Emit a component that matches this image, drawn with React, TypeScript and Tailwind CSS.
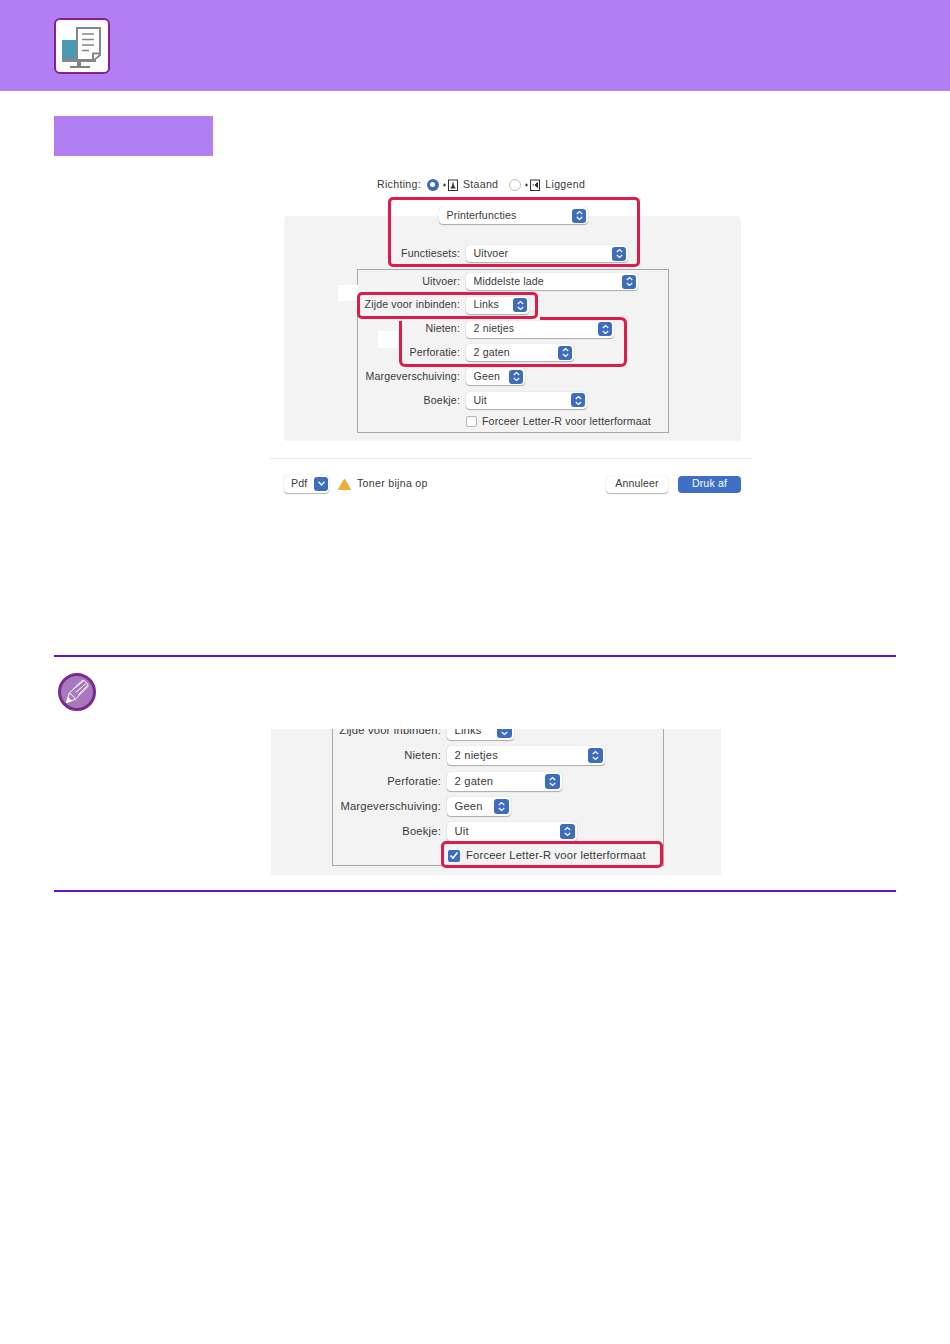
import React from "react";

const Stepper = ({ large }: { large?: boolean }) => (
  <span
    className={`flex items-center justify-center rounded-[3px] bg-[#3e6dbd] ${
      large ? "h-[15px] w-[15px]" : "h-[14px] w-[14px]"
    }`}
  >
    <svg width="9" height="11" viewBox="0 0 9 11" fill="none" stroke="#fff" strokeWidth="1.2">
      <path d="M1.8 4 4.5 1.6 7.2 4" />
      <path d="M1.8 7 4.5 9.4 7.2 7" />
    </svg>
  </span>
);

// macOS popup knop
const Select = ({ text, width, large }: { text: string; width: number; large?: boolean }) => (
  <div
    style={{ width }}
    className={`flex items-center justify-between rounded-[4px] bg-white pl-[7.5px] pr-[2px] shadow-[0_1px_1px_rgba(0,0,0,0.28),0_0_1px_rgba(0,0,0,0.25)] ${
      large ? "h-[19px]" : "h-[17px]"
    }`}
  >
    <span>{text}</span>
    <Stepper large={large} />
  </div>
);

const Row = ({
  label,
  text,
  width,
  labelWidth,
  large,
}: {
  label: string;
  text: string;
  width: number;
  labelWidth: number;
  large?: boolean;
}) => (
  <div className="flex items-center gap-[6px]">
    <span style={{ width: labelWidth }} className="shrink-0 whitespace-nowrap text-right">
      {label}
    </span>
    <Select text={text} width={width} large={large} />
  </div>
);

const OrientationIcon = ({ landscape }: { landscape?: boolean }) => (
  <svg className="block" width="16" height="12" viewBox="0 0 16 12" fill="none" stroke="#333" strokeWidth="1">
    <path d="M1 6h3M2.500 4.500v3" />
    <rect x="6.500" y="1" width="9" height="10.500" />
    {landscape ? (
      <path d="M8.500 6h1.500M13.500 3.500v5L11 6z" fill="#333" />
    ) : (
      <path d="M11 3v3M8.500 9h5M9.500 8.500 11 5.500l1.500 3z" fill="#333" />
    )}
  </svg>
);

const Radio = ({ on }: { on?: boolean }) =>
  on ? (
    <span className="flex h-[12px] w-[12px] items-center justify-center rounded-full bg-[#3e6dbd]">
      <span className="block h-[5px] w-[5px] rounded-full bg-white" />
    </span>
  ) : (
    <span className="block h-[12px] w-[12px] rounded-full border border-[#bdbdbd] bg-white" />
  );

const HeaderIcon = () => (
  <div className="flex h-[56px] w-[56px] items-center justify-center rounded-[6px] border-2 border-[#8a2090] bg-white">
    <svg width="52" height="52" viewBox="0 0 52 52">
      <rect x="6" y="20" width="34" height="22" fill="#4a9ab2" />
      <rect x="6" y="38" width="34" height="4" fill="#7e8a8e" />
      <rect x="21" y="42" width="4" height="4" fill="#808080" />
      <rect x="14" y="46" width="20" height="2" fill="#808080" />
      <path d="M21 8H44V35L38 40H21Z" fill="#fff" stroke="#858585" strokeWidth="2" />
      <path d="M26 14H38M26 19.500H38M26 25H38M26 30.500H33" stroke="#858585" strokeWidth="1.600" />
      <path d="M37 40V33.500H44" fill="#fff" stroke="#858585" strokeWidth="2" />
    </svg>
  </div>
);

const PencilIcon = () => (
  <svg className="block" width="38" height="38" viewBox="0 0 38 38">
    <circle cx="19" cy="19" r="17.500" fill="#a878bd" stroke="#7b2a8f" strokeWidth="3" />
    <g fill="none" stroke="#fff" strokeWidth="1" strokeLinejoin="round">
      <path d="M8.500 29.500 11 20.500 24 7.500C26 6.500 30.500 10.500 30 13.500L17 26.500Z" />
      <path d="M11 20.500C13.500 21 16.500 24 17 26.500M15 16.500 25.500 8M17.500 19.500 28 10.500M20 22 29.500 12.500" />
      <path d="M8.500 29.500 10 24.500 13.500 28Z" fill="#fff" />
    </g>
  </svg>
);

const rowsTop = [
  { label: "Uitvoer:", text: "Middelste lade", width: 172 },
  { label: "Zijde voor inbinden:", text: "Links", width: 63 },
  { label: "Nieten:", text: "2 nietjes", width: 148 },
  { label: "Perforatie:", text: "2 gaten", width: 108 },
  { label: "Margeverschuiving:", text: "Geen", width: 59 },
  { label: "Boekje:", text: "Uit", width: 121 },
];

const rowsNote = [
  { label: "Zijde voor inbinden:", text: "Links", width: 67 },
  { label: "Nieten:", text: "2 nietjes", width: 158 },
  { label: "Perforatie:", text: "2 gaten", width: 115 },
  { label: "Margeverschuiving:", text: "Geen", width: 64 },
  { label: "Boekje:", text: "Uit", width: 130 },
];

const PrintDialog = () => (
  <div className="relative ml-[270px] mt-[20px] h-[325px] w-[482px] text-[10.600px] tracking-[0.15px] text-[#3a3a3a]">
    <div className="flex h-[16px] items-center pl-[107px] pt-[1px] tracking-[0.3px]">
      <span>Richting:</span>
      <span className="ml-[6px]">
        <Radio on />
      </span>
      <span className="ml-[3px]">
        <OrientationIcon />
      </span>
      <span className="ml-[5px]">Staand</span>
      <span className="ml-[11px]">
        <Radio />
      </span>
      <span className="ml-[3px]">
        <OrientationIcon landscape />
      </span>
      <span className="ml-[5px]">Liggend</span>
    </div>

    <div className="ml-[14px] mt-[24px] h-[225px] w-[457px] rounded-[4px] bg-[#f3f3f3]">
      <div className="ml-[155px] -translate-y-[9px]">
        <Select text="Printerfuncties" width={149} />
      </div>
      <div className="mt-[12px]">
        <Row label="Functiesets:" text="Uitvoer" width={162} labelWidth={176} />
      </div>
      <div className="relative ml-[73px] mt-[7px] flex h-[164px] w-[312px] flex-col gap-[6.800px] border border-[#a8a8a8] pt-[3px]">
        {rowsTop.map((r) => (
          <Row key={r.label} label={r.label} text={r.text} width={r.width} labelWidth={102} />
        ))}
        <div className="-mt-[2px] flex items-center gap-[5px] pl-[108px]">
          <span className="block h-[11px] w-[11px] rounded-[2px] border border-[#b5b5b5] bg-white" />
          <span>Forceer Letter-R voor letterformaat</span>
        </div>
        {/* witte vlakjes in het origineel */}
        <span className="absolute -left-[20px] top-[15px] h-[16px] w-[20px] bg-white" />
        <span className="absolute left-[20px] top-[61px] h-[17px] w-[20px] bg-white" />
      </div>
    </div>

    <div className="mt-[17px] h-px bg-[#ececec]" />
    <div className="mt-[16px] flex items-center justify-between pl-[14px] pr-[11px]">
      <div className="flex items-center">
        <div className="flex h-[18px] w-[45px] items-center justify-between rounded-[4px] bg-white pb-[1px] pl-[7px] pr-[1px] shadow-[0_1px_1px_rgba(0,0,0,0.28),0_0_1px_rgba(0,0,0,0.25)]">
          <span>Pdf</span>
          <span className="flex h-[14px] w-[14px] items-center justify-center rounded-[3px] bg-[#3e6dbd]">
            <svg width="9" height="7" viewBox="0 0 9 7" fill="none" stroke="#fff" strokeWidth="1.300">
              <path d="M1.500 1.800 4.500 5 7.500 1.800" />
            </svg>
          </span>
        </div>
        <svg className="ml-[9px]" width="13" height="12" viewBox="0 0 13 12">
          <path d="M6.500 1 12.500 11.500H.5Z" fill="#f2ac35" stroke="#f2ac35" strokeLinejoin="round" />
        </svg>
        <span className="ml-[6px] tracking-[0.3px]">Toner bijna op</span>
      </div>
      <div className="flex items-center gap-[10px]">
        <div className="flex h-[17px] w-[62px] items-center justify-center rounded-[4px] bg-white pb-[1px] shadow-[0_1px_1px_rgba(0,0,0,0.28),0_0_1px_rgba(0,0,0,0.25)]">
          Annuleer
        </div>
        <div className="flex h-[17px] w-[63px] items-center justify-center rounded-[4px] bg-[#3e6fc4] pb-[1px] text-white">
          Druk af
        </div>
      </div>
    </div>

    {/* rode kaders */}
    <div className="absolute left-[118px] top-[21px] h-[70px] w-[252px] rounded-[5px] border-[3px] border-[#dc1c4b]" />
    <div className="absolute left-[87px] top-[116px] h-[27px] w-[181px] rounded-[5px] border-[3px] border-[#dc1c4b]" />
    <svg className="absolute left-[120px] top-[135px]" width="245" height="60" fill="none" stroke="#dc1c4b" strokeWidth="3">
      <path d="M10.500 10V49.500Q10.500 54.500 15.500 54.500H230.500Q235.500 54.500 235.500 49.500V12.500Q235.500 7.500 230.500 7.500H150" />
    </svg>
  </div>
);

const NoteShot = () => (
  <div className="relative ml-[217px] mt-[-1px] h-[146px] w-[450px] overflow-hidden bg-[#f3f3f3] text-[11.200px] tracking-[0.2px] text-[#3a3a3a]">
    <div className="-mt-[8px] ml-[61px] flex h-[145px] w-[332px] flex-col gap-[6.300px] border-x border-b border-[#a8a8a8]">
      {rowsNote.map((r) => (
        <Row key={r.label} label={r.label} text={r.text} width={r.width} labelWidth={108} large />
      ))}
      <div className="flex items-center gap-[6px] pl-[115px]">
        <span className="flex h-[12px] w-[12px] items-center justify-center rounded-[2px] bg-[#3e6dbd]">
          <svg width="10" height="9" viewBox="0 0 10 9" fill="none" stroke="#fff" strokeWidth="1.600">
            <path d="M1.500 4.500 4 7 8.500 1.500" />
          </svg>
        </span>
        <span>Forceer Letter-R voor letterformaat</span>
      </div>
    </div>
    <div className="absolute left-[170px] top-[112px] h-[27px] w-[222px] rounded-[5px] border-[3px] border-[#dc1c4b]" />
  </div>
);

export default function App() {
  return (
    <div className="h-[1344px] w-[950px] bg-white" style={{ fontFamily: '"Liberation Sans", Arial, sans-serif' }}>
      <header className="flex h-[91px] items-center bg-[#b17ff1] pl-[54px]">
        <HeaderIcon />
      </header>
      <div className="ml-[54px] mt-[25px] h-[40px] w-[159px] bg-[#b17ff1]" />
      <PrintDialog />
      <section className="mx-[54px] mt-[154px]">
        <div className="h-[2px] bg-[#6a10d6]" />
        <div className="ml-[4px] mt-[16px] h-[57px]">
          <PencilIcon />
        </div>
        <NoteShot />
        <div className="mt-[15px] h-[2px] bg-[#6a10d6]" />
      </section>
    </div>
  );
}
